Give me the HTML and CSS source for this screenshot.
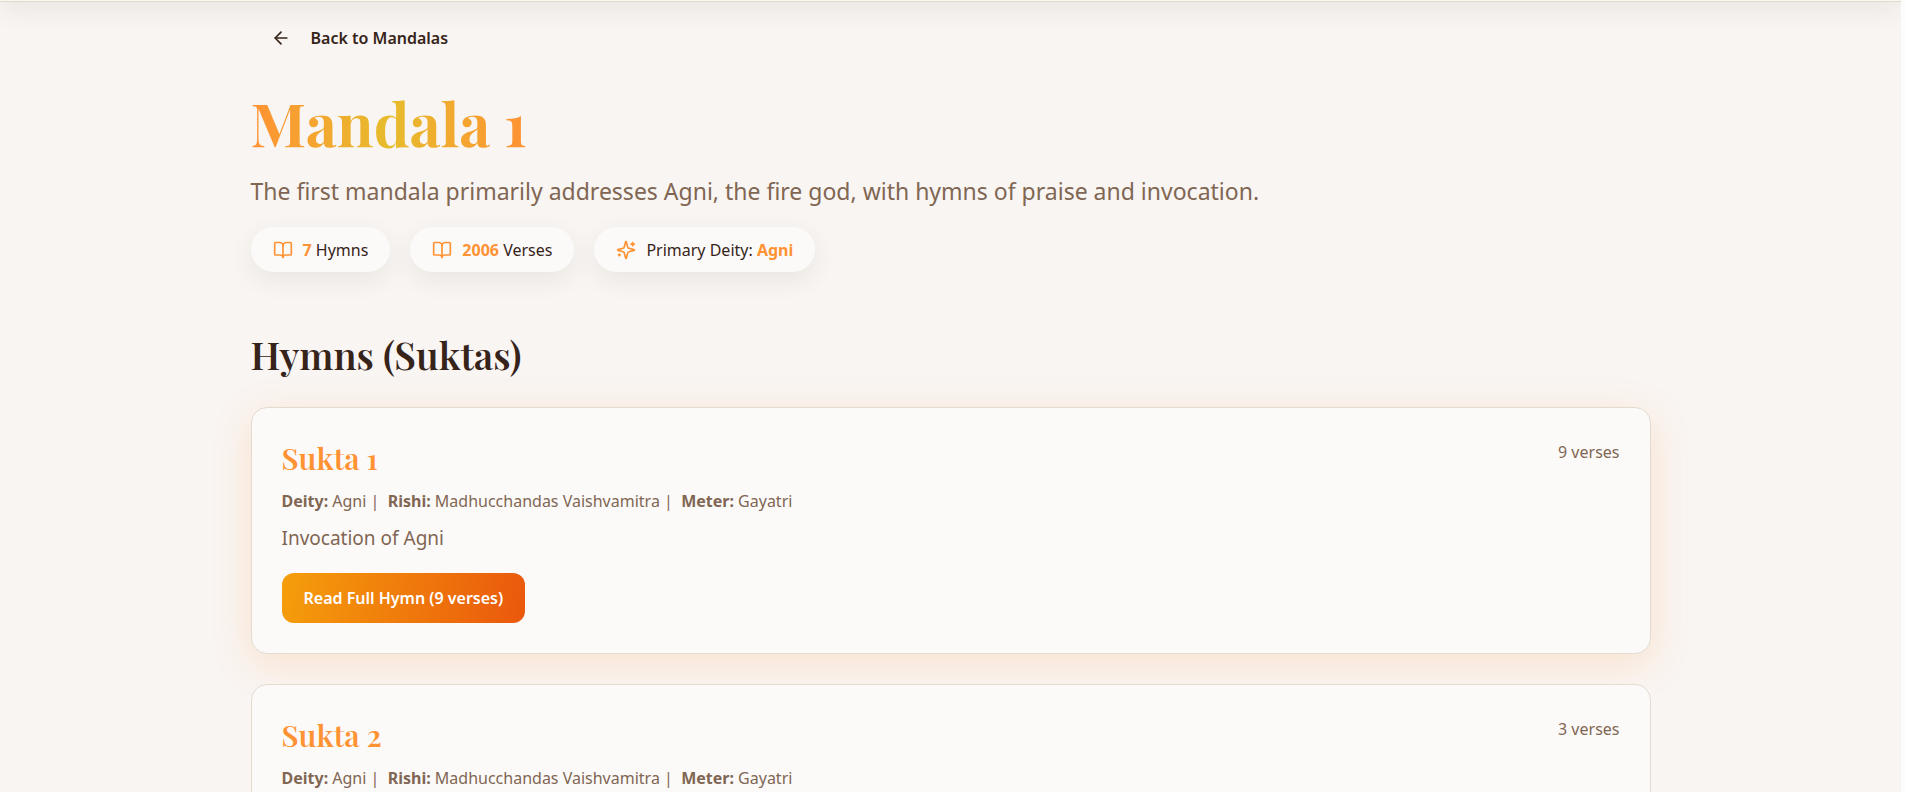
FILE: index.html
```html
<!DOCTYPE html>
<html lang="en">
<head>
    <meta charset="UTF-8">
    <meta name="viewport" content="width=device-width, initial-scale=1.0">
    <title>Mandala 1</title>
    <link rel="stylesheet" href="styles.css">
</head>
<body>
    <div class="page">
        <header class="navbar"></header>
        <main class="container">
            <a href="#" class="back-link">
                <svg class="back-icon" viewBox="0 0 24 24"><path d="m12 19-7-7 7-7"/><path d="M19 12H5"/></svg>
                <span>Back to Mandalas</span>
            </a>

            <h1 class="title">Mandala 1</h1>
            <p class="description">The first mandala primarily addresses Agni, the fire god, with hymns of praise and invocation.</p>

            <div class="stats">
                <div class="stat">
                    <svg class="stat-icon" viewBox="0 0 24 24"><path d="M12 7v14"/><path d="M3 18a1 1 0 0 1-1-1V4a1 1 0 0 1 1-1h5a4 4 0 0 1 4 4 4 4 0 0 1 4-4h5a1 1 0 0 1 1 1v13a1 1 0 0 1-1 1h-6a3 3 0 0 0-3 3 3 3 0 0 0-3-3z"/></svg>
                    <span><strong>7</strong> Hymns</span>
                </div>
                <div class="stat">
                    <svg class="stat-icon" viewBox="0 0 24 24"><path d="M12 7v14"/><path d="M3 18a1 1 0 0 1-1-1V4a1 1 0 0 1 1-1h5a4 4 0 0 1 4 4 4 4 0 0 1 4-4h5a1 1 0 0 1 1 1v13a1 1 0 0 1-1 1h-6a3 3 0 0 0-3 3 3 3 0 0 0-3-3z"/></svg>
                    <span><strong>2006</strong> Verses</span>
                </div>
                <div class="stat">
                    <svg class="stat-icon" viewBox="0 0 24 24"><path d="M9.937 15.5A2 2 0 0 0 8.5 14.063l-6.135-1.582a.5.5 0 0 1 0-.962L8.5 9.936A2 2 0 0 0 9.937 8.5l1.582-6.135a.5.5 0 0 1 .963 0L14.063 8.5A2 2 0 0 0 15.5 9.937l6.135 1.581a.5.5 0 0 1 0 .964L15.5 14.063a2 2 0 0 0-1.437 1.437l-1.582 6.135a.5.5 0 0 1-.963 0z"/><path d="M20 3v4"/><path d="M22 5h-4"/><path d="M4 17v2"/><path d="M5 18H3"/></svg>
                    <span>Primary Deity: <strong>Agni</strong></span>
                </div>
            </div>

            <h2 class="section-title">Hymns (Suktas)</h2>

            <div class="hymn-list">
                <article class="hymn-card active">
                    <div class="hymn-info">
                        <h3>Sukta 1</h3>
                        <p class="hymn-meta"><strong>Deity:</strong> Agni |&nbsp; <strong>Rishi:</strong> Madhucchandas Vaishvamitra |&nbsp; <strong>Meter:</strong> Gayatri</p>
                        <p class="hymn-summary">Invocation of Agni</p>
                        <button type="button" class="read-button">Read Full Hymn (9 verses)</button>
                    </div>
                    <span class="verse-count">9 verses</span>
                </article>
                <article class="hymn-card">
                    <div class="hymn-info">
                        <h3>Sukta 2</h3>
                        <p class="hymn-meta"><strong>Deity:</strong> Agni |&nbsp; <strong>Rishi:</strong> Madhucchandas Vaishvamitra |&nbsp; <strong>Meter:</strong> Gayatri</p>
                    </div>
                    <span class="verse-count">3 verses</span>
                </article>
            </div>
        </main>
    </div>
</body>
</html>
```
FILE: styles.css
```css
* {
    box-sizing: border-box;
}
body {
    margin: 0;
    font-family: "Noto Sans", "Open Sans", sans-serif;
    font-size: 16px;
    color: #36241a;
    background-color: #fcfcfc;
}
h1, h2, h3, p {
    margin: 0;
}
h1, h2, h3 {
    font-family: "Playfair Display", "Liberation Serif", serif;
}
svg {
    fill: none;
    stroke: currentColor;
    stroke-width: 2;
    stroke-linecap: round;
    stroke-linejoin: round;
}
.page {
    display: flow-root;
    height: 100vh;
    margin-right: 4px;
    overflow: hidden;
    background-color: #f9f5f2;
}
/* header is tucked above the page, only its bottom edge shows */
.navbar {
    height: 80px;
    margin-top: -78px;
    background-color: #fbf7ee;
    border-bottom: 1px solid #e0dbcf;
    box-shadow: 0 8px 24px rgba(50, 45, 35, 0.08);
}
.container {
    max-width: 1400px;
    margin: 0 auto;
    padding-top: 14px;
}
.back-link {
    display: inline-flex;
    align-items: center;
    gap: 20px;
    height: 44px;
    padding: 0 20px;
    font-weight: 600;
    color: #36241a;
    text-decoration: none;
}
.back-icon {
    width: 20px;
    height: 20px;
}
.title {
    width: fit-content;
    margin-top: 26px;
    font-size: 60px;
    line-height: 72px;
    color: transparent;
    background: linear-gradient(90deg, #ff9233, #e7bc2d, #ff9233);
    -webkit-background-clip: text;
    background-clip: text;
}
.description {
    margin-top: 14px;
    font-size: 23px;
    line-height: 38px;
    color: #806653;
}
.stats {
    display: flex;
    flex-wrap: wrap;
    gap: 20px;
    margin-top: 17px;
}
.stat {
    display: flex;
    align-items: center;
    gap: 10px;
    height: 45px;
    padding: 0 22px;
    border-radius: 24px;
    background-color: #fcfaf9;
    box-shadow: 0 8px 24px rgba(50, 45, 35, 0.08);
}
.stat strong {
    color: #ff9233;
}
.stat-icon {
    width: 20px;
    height: 20px;
    color: #ff9233;
}
.section-title {
    margin-top: 59px;
    font-size: 38px;
    font-weight: 600;
    line-height: 48px;
}
.hymn-list {
    display: flex;
    flex-direction: column;
    gap: 30px;
    margin-top: 28px;
}
.hymn-card {
    display: flex;
    justify-content: space-between;
    padding: 30px;
    border: 1px solid #e3dbd0;
    border-radius: 16px;
    background-color: #fcfaf9;
    color: #806653;
}
.hymn-card.active {
    box-shadow: 0 10px 40px rgba(255, 136, 40, 0.18);
}
.hymn-card h3 {
    font-size: 30px;
    font-weight: 600;
    line-height: 40px;
    color: #ff9233;
}
.hymn-meta {
    margin-top: 9px;
    line-height: 28px;
}
.hymn-summary {
    margin-top: 8px;
    font-size: 19px;
    line-height: 30px;
}
.read-button {
    height: 50px;
    margin-top: 20px;
    padding: 0 22px;
    border: none;
    border-radius: 12px;
    font-family: inherit;
    font-size: 16px;
    font-weight: 600;
    color: #fff;
    background: linear-gradient(100deg, #f59e0b, #ea580c);
    cursor: pointer;
}
.verse-count {
    line-height: 28px;
}
```
